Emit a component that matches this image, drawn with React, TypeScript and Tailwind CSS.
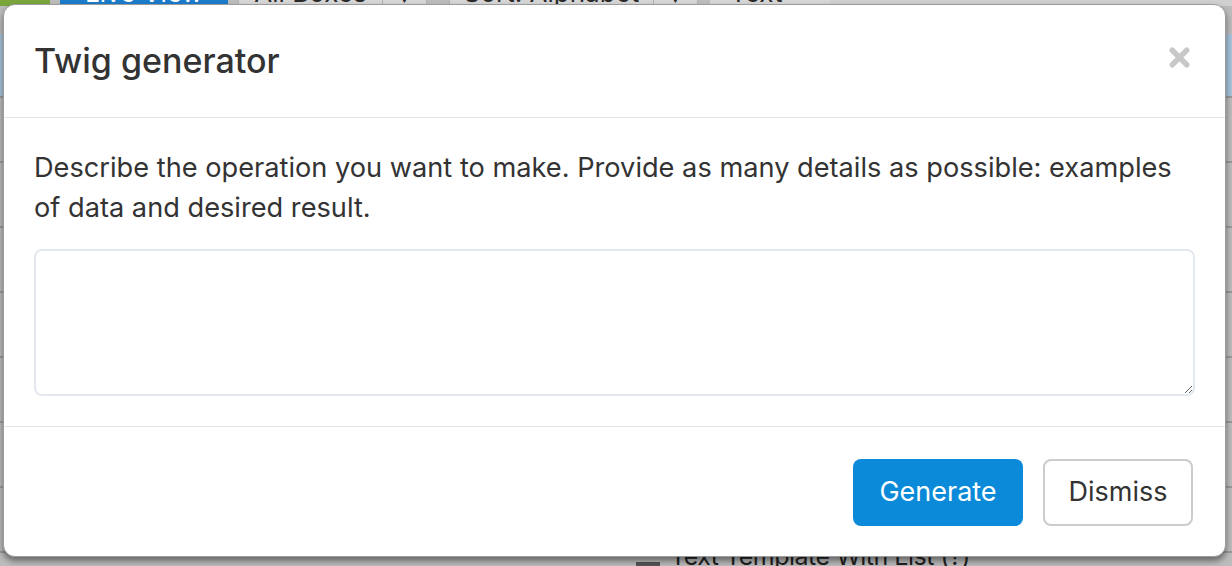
import { X } from 'lucide-react';

const rowLines = [102, 148, 194, 259, 323, 388, 453, 518];

function BackgroundPage() {
  return (
    <div className="absolute inset-0 bg-[#bcbcbc]">
      {/* toolbar peeking above the modal */}
      <div className="flex items-end h-[6px] overflow-hidden text-[26px] leading-none text-[#2a2a2a]">
        <div className="w-[50px] h-[40px] bg-[#7aa63c] shrink-0" />
        <div className="w-[168px] h-[40px] ml-[10px] bg-[#1c7ccb] text-white flex items-end justify-center shrink-0">Live View</div>
        <div className="w-[145px] h-[40px] ml-[10px] bg-[#d6d6d6] border-x border-[#b0b0b0] flex items-end justify-center shrink-0">All Boxes</div>
        <div className="w-[44px] h-[40px] bg-[#d6d6d6] border-r border-[#b0b0b0] flex items-end justify-center shrink-0">▼</div>
        <div className="w-[205px] h-[40px] ml-[22px] bg-[#d6d6d6] border-x border-[#b0b0b0] flex items-end justify-center shrink-0">Sort: Alphabet</div>
        <div className="w-[44px] h-[40px] bg-[#d6d6d6] border-r border-[#b0b0b0] flex items-end justify-center shrink-0">▼</div>
        <div className="w-[120px] h-[40px] ml-[12px] bg-[#d6d6d6] flex items-end pl-[20px] shrink-0">Text</div>
        <div className="flex-1 h-[40px] bg-[#d0d0d0]" />
      </div>
      <div className="h-[28px]" />
      <div className="h-[62px] bg-[#a7c3da]" />
      {rowLines.map((y) => (
        <div key={y} className="h-[65px] border-t-[2px] border-[#9a9a9a]" />
      ))}
      <div className="absolute left-0 right-0 bottom-0 h-[10px] flex items-start text-[25px] leading-none text-[#222] overflow-hidden">
        <div className="ml-[636px] w-[24px] h-[4px] mt-[6px] bg-[#555]" />
        <span className="ml-[10px] -mt-[12px] tracking-[-0.5px]">Text Template With List (?)</span>
      </div>
    </div>
  );
}

export default function App() {
  return (
    <div className="relative w-[1232px] h-[566px] overflow-hidden" style={{ fontFamily: 'Inter, "Noto Sans", sans-serif' }}>
      <BackgroundPage />

      <div className="absolute left-[3px] top-[4px] w-[1223px] h-[553px] bg-white rounded-[12px] border border-[#9c9c9c] shadow-[0_4px_6px_rgba(0,0,0,0.45)] flex flex-col">
        <div className="flex items-center justify-between px-[30px] h-[113px] border-b border-[#e5e5e5]">
          <h4 className="text-[34px] font-medium text-[#333] leading-none">Twig generator</h4>
          <button className="text-[#c8c8c8] -mt-[8px] mr-[1px]">
            <X className="w-[29px] h-[29px]" strokeWidth={4.5} />
          </button>
        </div>

        <div className="p-[30px] pb-[30px] border-b border-[#e5e5e5]">
          <p className="text-[27.2px] leading-[40px] text-[#333]">
            Describe the operation you want to make. Provide as many details as possible: examples of data and desired result.
          </p>
          <textarea className="block w-full h-[147px] mt-[21px] border-2 border-[#e3e8ef] rounded-[8px] outline-none" />
        </div>

        <div className="flex justify-end gap-[20px] pl-[30px] pr-[32px] pt-[32px]">
          <button className="h-[67px] w-[170px] rounded-[8px] bg-[#0a8ad8] text-white text-[27px]">Generate</button>
          <button className="h-[67px] w-[150px] rounded-[8px] border-2 border-[#cccccc] bg-white text-[#333] text-[27px]">Dismiss</button>
        </div>
      </div>
    </div>
  );
}
